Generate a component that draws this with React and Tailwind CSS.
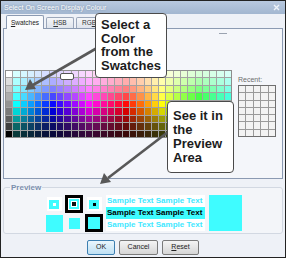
import React from "react";

const GREYS = ["#ffffff", "#dedede", "#c6c6c6", "#adadad", "#949494", "#7a7a7a", "#5e5e5e", "#3e3e3e", "#000000"];
const LIGHT = [92, 84, 75, 64, 52, 42, 32, 22, 13];
const SAT = [100, 100, 100, 100, 100, 100, 90, 80, 75];

function cellColor(r, c) {
  if (c === 0) return GREYS[r];
  const h = (180 + (c - 1) * 12) % 360;
  return `hsl(${h} ${SAT[r]}% ${LIGHT[r]}%)`;
}

const CYAN = "#3ffcff";

function Swatches() {
  const cells = [];
  for (let r = 0; r < 9; r++) {
    for (let c = 0; c < 31; c++) {
      cells.push(<div key={`${r}-${c}`} style={{ background: cellColor(r, c) }} />);
    }
  }
  return (
    <div className="relative border border-[#8d8d8d]">
      <div className="grid grid-cols-[repeat(31,minmax(0,1fr))] grid-rows-[repeat(9,minmax(0,1fr))] gap-px bg-[#a3a3a3] w-[225px] h-[66px]">
        {cells}
      </div>
      <div className="absolute left-[54px] top-[2px] w-[14px] h-[7px] rounded-[2px] bg-white border border-[#555]" />
    </div>
  );
}

function Recent() {
  return (
    <div className="flex flex-col">
      <div className="text-[7px] leading-[8px] text-[#6d6d6d] mt-[6px] h-[9px]">Recent:</div>
      <div className="border border-[#6f6f6f] w-[38px] h-[52px]">
        <div className="grid grid-cols-5 grid-rows-7 gap-px bg-[#9a9a9a] w-full h-full">
          {Array.from({ length: 35 }).map((_, i) => (
            <div key={i} className="bg-[#f3f3f3]" />
          ))}
        </div>
      </div>
    </div>
  );
}

function Tab({ children, selected, w }) {
  return selected ? (
    <div
      className={`${w} h-[14px] -mb-px relative z-10 border border-b-0 border-[#8b9ab2] rounded-t-[2px] bg-[#fafbfd] flex items-center justify-center text-[6.5px] text-[#222]`}
    >
      {children}
    </div>
  ) : (
    <div
      className={`${w} h-[11px] border border-b-0 border-[#9aa6ba] rounded-t-[2px] bg-gradient-to-b from-[#f4f6f9] to-[#dfe4ec] flex items-center justify-center text-[6.5px] text-[#333]`}
    >
      {children}
    </div>
  );
}

function Btn({ children, w, primary }) {
  return (
    <div
      className={`${w} h-[15px] rounded-[2px] border flex items-center justify-center text-[7px] text-[#222] ${
        primary
          ? "border-[#3c7fb1] bg-gradient-to-b from-[#eaf6fd] to-[#bfe0f3]"
          : "border-[#7a7a7a] bg-gradient-to-b from-[#f4f4f4] to-[#d6d6d6]"
      }`}
    >
      {children}
    </div>
  );
}

function Preview() {
  return (
    <fieldset className="mx-[2px] border border-[#d2d8e2] rounded-[3px] bg-[#f3f5f9] h-[51px] px-[3px]">
      <legend className="ml-[3px] px-px text-[8px] leading-[9px] font-bold text-[#7b8fae]">Preview</legend>
      <div className="flex items-start pl-[38px] pt-[3px]">
        <div className="grid grid-cols-[18px_18px_18px] grid-rows-[18px_18px] gap-x-[2px] gap-y-[1px]">
          <div className="flex items-center justify-center">
            <div className="w-[15px] h-[14px] bg-white flex items-center justify-center">
              <div className="w-[10px] h-[9px] flex items-center justify-center" style={{ background: CYAN }}>
                <div className="w-[3px] h-[3px] bg-white" />
              </div>
            </div>
          </div>
          <div className="flex items-center justify-center">
            <div className="w-[18px] h-[18px] bg-black flex items-center justify-center">
              <div className="w-[12px] h-[12px] bg-white flex items-center justify-center">
                <div className="w-[10px] h-[10px] flex items-center justify-center" style={{ background: CYAN }}>
                  <div className="w-[4px] h-[4px] bg-[#111]" style={{ boxShadow: "0 0 0 1px #fff" }} />
                </div>
              </div>
            </div>
          </div>
          <div className="flex items-center justify-center">
            <div className="w-[15px] h-[14px] bg-white flex items-center justify-center">
              <div className="w-[10px] h-[9px] flex items-center justify-center" style={{ background: CYAN }}>
                <div className="w-[3px] h-[3px] bg-black" />
              </div>
            </div>
          </div>
          <div className="flex items-center justify-center">
            <div className="w-[17px] h-[17px]" style={{ background: CYAN }} />
          </div>
          <div className="flex items-center justify-center">
            <div className="w-[11px] h-[11px]" style={{ background: CYAN }} />
          </div>
          <div className="flex items-center justify-center">
            <div className="w-[18px] h-[18px] bg-black flex items-center justify-center">
              <div className="w-[12px] h-[12px]" style={{ background: CYAN }} />
            </div>
          </div>
        </div>
        <div className="ml-[3px] w-[99px] flex flex-col text-[8px] leading-[12px] font-bold">
          <div className="bg-white px-px text-[#3fe8ff]">Sample Text Sample Text</div>
          <div className="px-px text-black" style={{ background: CYAN }}>Sample Text Sample Text</div>
          <div className="bg-white px-px text-[#3fe8ff]">Sample Text Sample Text</div>
        </div>
        <div className="ml-[4px] w-[33px] h-[36px]" style={{ background: CYAN }} />
      </div>
    </fieldset>
  );
}

export default function App() {
  return (
    <div
      className="relative w-[286px] h-[258px] overflow-hidden border border-[#222] bg-[#eef1f7] flex flex-col"
      style={{ fontFamily: '"Liberation Sans", Arial, sans-serif' }}
    >
      {/* title bar */}
      <div className="h-[13px] shrink-0 flex items-center justify-between pl-[3px] pr-[5px] bg-gradient-to-b from-[#b8c9df] to-[#a2b6d0]">
        <span className="text-[7px] leading-[8px] text-white [text-shadow:0_0_2px_#6d819e]">Select On Screen Display Colour</span>
        <svg width="7" height="7" viewBox="0 0 7 7">
          <path d="M1 1L6 6M6 1L1 6" stroke="#eef3f9" strokeWidth="1.4" />
        </svg>
      </div>
      {/* tabs */}
      <div className="h-[14px] shrink-0 flex items-end gap-[2px] pl-[5px]">
        <Tab selected w="w-[38px]"><span><u>S</u>watches</span></Tab>
        <Tab w="w-[28px]"><span><u>H</u>SB</span></Tab>
        <Tab w="w-[26px]"><span>RG<u>B</u></span></Tab>
      </div>
      {/* tab panel */}
      <div className="mx-[2px] h-[151px] shrink-0 border border-[#8b9ab2] bg-[#f4f6fa] flex flex-col">
        <div className="h-[4px]" />
        <div className="pl-[215px]"><div className="w-[8px] h-px bg-[#9aa3b0]" /></div>
        <div className="flex items-start pl-[1px] mt-[36px]">
          <Swatches />
          <div className="ml-[6px]"><Recent /></div>
        </div>
      </div>
      <div className="h-[4px] shrink-0" />
      <Preview />
      <div className="flex justify-center gap-[4px] mt-[6px]">
        <Btn w="w-[28px]" primary>OK</Btn>
        <Btn w="w-[39px]">Cancel</Btn>
        <Btn w="w-[37px]"><span><u>R</u>eset</span></Btn>
      </div>

      {/* arrows */}
      <svg className="absolute left-0 top-0 pointer-events-none" width="286" height="258" viewBox="0 0 286 258">
        <line x1="96" y1="47" x2="32" y2="84" stroke="#585858" strokeWidth="2.6" />
        <polygon points="24,89 29,78 35,88" fill="#585858" />
        <line x1="167" y1="131" x2="107" y2="177" stroke="#585858" strokeWidth="2.6" />
        <polygon points="99,183 103,172 110,181" fill="#585858" />
      </svg>

      {/* callouts */}
      <div className="absolute left-[94px] top-[12px] w-[72px] h-[65px] bg-white border border-[#4a4a4a] rounded-[4px] pl-[5px] pt-[4px] text-[13px] leading-[13.5px] font-bold text-[#1c1c1c]">
        Select a<br />Color<br />from the<br />Swatches
      </div>
      <div className="absolute left-[166px] top-[100px] w-[67px] h-[72px] bg-white border border-[#4a4a4a] rounded-[4px] pl-[5px] pt-[7px] text-[13px] leading-[14px] font-bold text-[#1c1c1c]">
        See it in<br />the<br />Preview<br />Area
      </div>
    </div>
  );
}
